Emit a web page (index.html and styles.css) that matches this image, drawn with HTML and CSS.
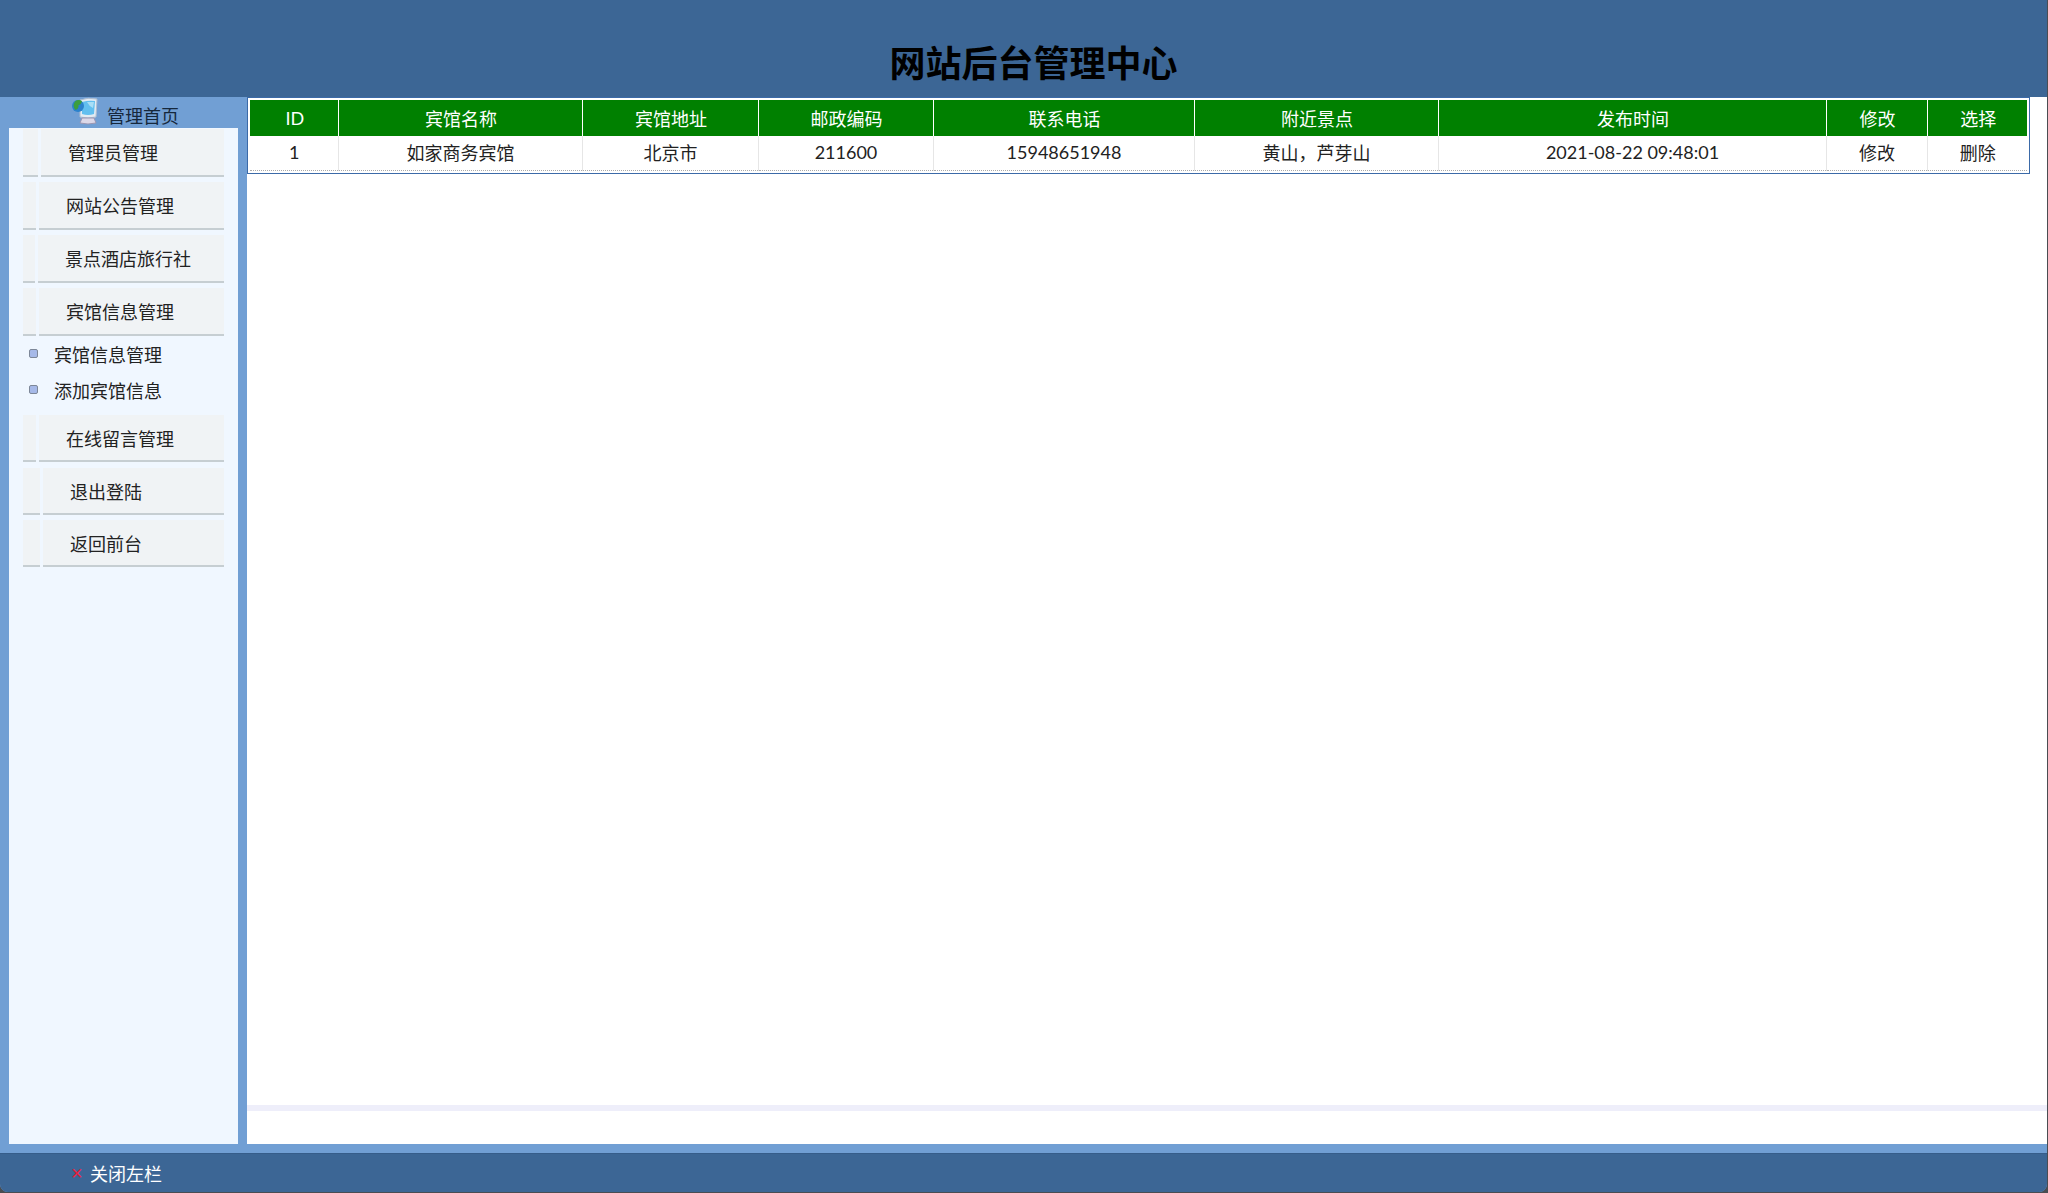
FILE: index.html
```html
<!DOCTYPE html>
<html>

<head>
    <meta charset="utf-8" />
    <title>网站后台管理中心</title>
    <link rel="stylesheet" href="styles.css">
</head>

<body>
    <div class="page">
        <header class="top-bar">
            <h1>网站后台管理中心</h1>
        </header>
        <div class="middle">
            <aside class="side">
                <div class="side-home">
                    <svg class="home-icon" viewBox="0 0 26 28" width="26" height="28">
                        <path d="M8 3 Q16 0 25 2 L24 20 Q16 22 8 20 Z" fill="#e2ebf3" stroke="#aebdd0" stroke-width="1" />
                        <path d="M10 5 Q17 3 23 4 L22 17 Q16 19 10 17 Z" fill="#62bfef" />
                        <path d="M15 5 L22 5 L21 11 Q17 9 15 5 Z" fill="#a8def6" />
                        <circle cx="6" cy="9" r="6" fill="#2b82cc" />
                        <path d="M3 4.5 Q6 2 10 4 Q9 8 6.5 8 Q7 12 3.5 13 Q0 9 3 4.5 Z" fill="#3c9e3e" />
                        <path d="M10 21 L22 21 L24 26 Q16 28 8 26 Z" fill="#dcd8e8" stroke="#9a96b2" stroke-width="1" />
                    </svg>
                    <span>管理首页</span>
                </div>
                <nav class="side-menu">
                    <a class="menu-item cap-15"><i></i><span>管理员管理</span></a>
                    <a class="menu-item cap-13"><i></i><span>网站公告管理</span></a>
                    <a class="menu-item cap-12"><i></i><span>景点酒店旅行社</span></a>
                    <a class="menu-item cap-13"><i></i><span>宾馆信息管理</span></a>
                    <ul class="sub-menu">
                        <li>宾馆信息管理</li>
                        <li>添加宾馆信息</li>
                    </ul>
                    <a class="menu-item cap-13"><i></i><span>在线留言管理</span></a>
                    <a class="menu-item cap-17"><i></i><span>退出登陆</span></a>
                    <a class="menu-item cap-17"><i></i><span>返回前台</span></a>
                </nav>
            </aside>
            <main class="content">
                <div class="table-wrap">
                    <table class="list-table">
                        <colgroup>
                            <col class="c-id">
                            <col class="c-name">
                            <col class="c-addr">
                            <col class="c-zip">
                            <col class="c-tel">
                            <col class="c-spot">
                            <col class="c-time">
                            <col class="c-edit">
                            <col class="c-del">
                        </colgroup>
                        <thead>
                            <tr>
                                <th>ID</th>
                                <th>宾馆名称</th>
                                <th>宾馆地址</th>
                                <th>邮政编码</th>
                                <th>联系电话</th>
                                <th>附近景点</th>
                                <th>发布时间</th>
                                <th>修改</th>
                                <th>选择</th>
                            </tr>
                        </thead>
                        <tbody>
                            <tr>
                                <td>1</td>
                                <td>如家商务宾馆</td>
                                <td>北京市</td>
                                <td>211600</td>
                                <td>15948651948</td>
                                <td>黄山，芦芽山</td>
                                <td>2021-08-22 09:48:01</td>
                                <td>修改</td>
                                <td>删除</td>
                            </tr>
                        </tbody>
                    </table>
                </div>
                <div class="content-rule"></div>
            </main>
        </div>
        <footer class="bottom-bar">
            <span class="close-x">×</span>
            <span>关闭左栏</span>
        </footer>
    </div>
</body>

</html>
```

FILE: styles.css
```css
html,
body {
    margin: 0;
    height: 100%;
    background: #4a4d52;
    overflow: hidden;
}

body {
    font-family: "Lato", "Noto Sans CJK SC", "Liberation Sans", sans-serif;
    font-size: 18px;
    color: #222;
}

.page {
    width: 2047px;
    height: 1192px;
    display: flex;
    flex-direction: column;
    background: #719fd4;
    border-radius: 0 0 8px 8px;
    overflow: hidden;
}

.top-bar {
    height: 97px;
    flex: none;
    background: #3c6695;
    padding-left: 20px;
    box-sizing: border-box;
}

.top-bar h1 {
    margin: 0;
    padding-top: 35px;
    font-size: 36px;
    line-height: 56px;
    font-weight: bold;
    text-align: center;
    color: #000;
}

.middle {
    flex: 1;
    display: flex;
    min-height: 0;
    padding-bottom: 9px;
}

.side {
    width: 247px;
    flex: none;
    display: flex;
    flex-direction: column;
    padding: 0 9px;
    box-sizing: border-box;
}

.side-home {
    height: 31px;
    flex: none;
    display: flex;
    align-items: flex-end;
    padding-left: 63px;
    color: #16283c;
    line-height: 26px;
}

.home-icon {
    margin-right: 9px;
    margin-bottom: 3px;
}

.side-home span {
    position: relative;
    top: 1px;
}

.side-menu {
    flex: 1;
    background: #f0f7ff;
    padding: 1px 14px 0;
}

.menu-item {
    display: flex;
    height: 48px;
    margin-bottom: 5px;
    line-height: 48px;
    color: #222;
}

.menu-item i {
    flex: none;
    background: #f0f3f5;
    border-bottom: 2px solid #c6ced2;
    box-sizing: border-box;
    margin-right: 3px;
}

.menu-item span {
    flex: 1;
    background: #f0f3f5;
    border-bottom: 2px solid #c6ced2;
    box-sizing: border-box;
    padding-left: 27px;
}

.sub-menu ~ .menu-item {
    height: 47px;
}

.sub-menu + .menu-item {
    margin-bottom: 6px;
}

.cap-12 i {
    width: 12px;
}

.cap-13 i {
    width: 13px;
}

.cap-15 i {
    width: 15px;
}

.cap-17 i {
    width: 17px;
}

.sub-menu {
    list-style: none;
    margin: -4px 0 6px;
    padding: 0;
}

.sub-menu li {
    height: 36px;
    line-height: 36px;
    padding-left: 31px;
    position: relative;
}

.sub-menu li::before {
    content: "";
    position: absolute;
    left: 6px;
    top: 12px;
    width: 7px;
    height: 7px;
    border: 1px solid #7d8798;
    border-radius: 2px;
    background: #a6b9e8;
}

.content {
    flex: 1;
    background: #fff;
    display: flex;
    flex-direction: column;
    min-width: 0;
}

.table-wrap {
    width: 1783px;
    box-sizing: border-box;
    border: 1px solid #3b6aa8;
    padding: 2px;
}

.list-table {
    width: 1777px;
    table-layout: fixed;
    border-collapse: collapse;
    border-bottom: 1px dotted #aaa;
}

.list-table th {
    height: 36px;
    padding: 0 0 0 2px;
    background: #008000;
    color: #fff;
    font-weight: normal;
    border-left: 1px solid #fff;
}

.list-table td {
    height: 34px;
    padding: 0 0 2px 1px;
    box-sizing: border-box;
    text-align: center;
    color: #222;
    border-left: 1px solid #e6e6e6;
}

.list-table th:first-child,
.list-table td:first-child {
    border-left: 0;
}

.c-id {
    width: 88px;
}

.c-name {
    width: 244px;
}

.c-addr {
    width: 176px;
}

.c-zip {
    width: 175px;
}

.c-tel {
    width: 261px;
}

.c-spot {
    width: 244px;
}

.c-time {
    width: 388px;
}

.c-edit {
    width: 101px;
}

.c-del {
    width: 100px;
}

.content-rule {
    height: 6px;
    background: #eeeefa;
    margin-top: 931px;
}

.bottom-bar {
    height: 39px;
    flex: none;
    box-sizing: border-box;
    background: #3c6695;
    border-top: 1px solid #365d8a;
    padding-left: 71px;
    display: flex;
    align-items: center;
    color: #fff;
}

.close-x {
    color: #e8213c;
    font-family: "Liberation Sans", sans-serif;
    font-size: 20px;
    width: 19px;
}
```
